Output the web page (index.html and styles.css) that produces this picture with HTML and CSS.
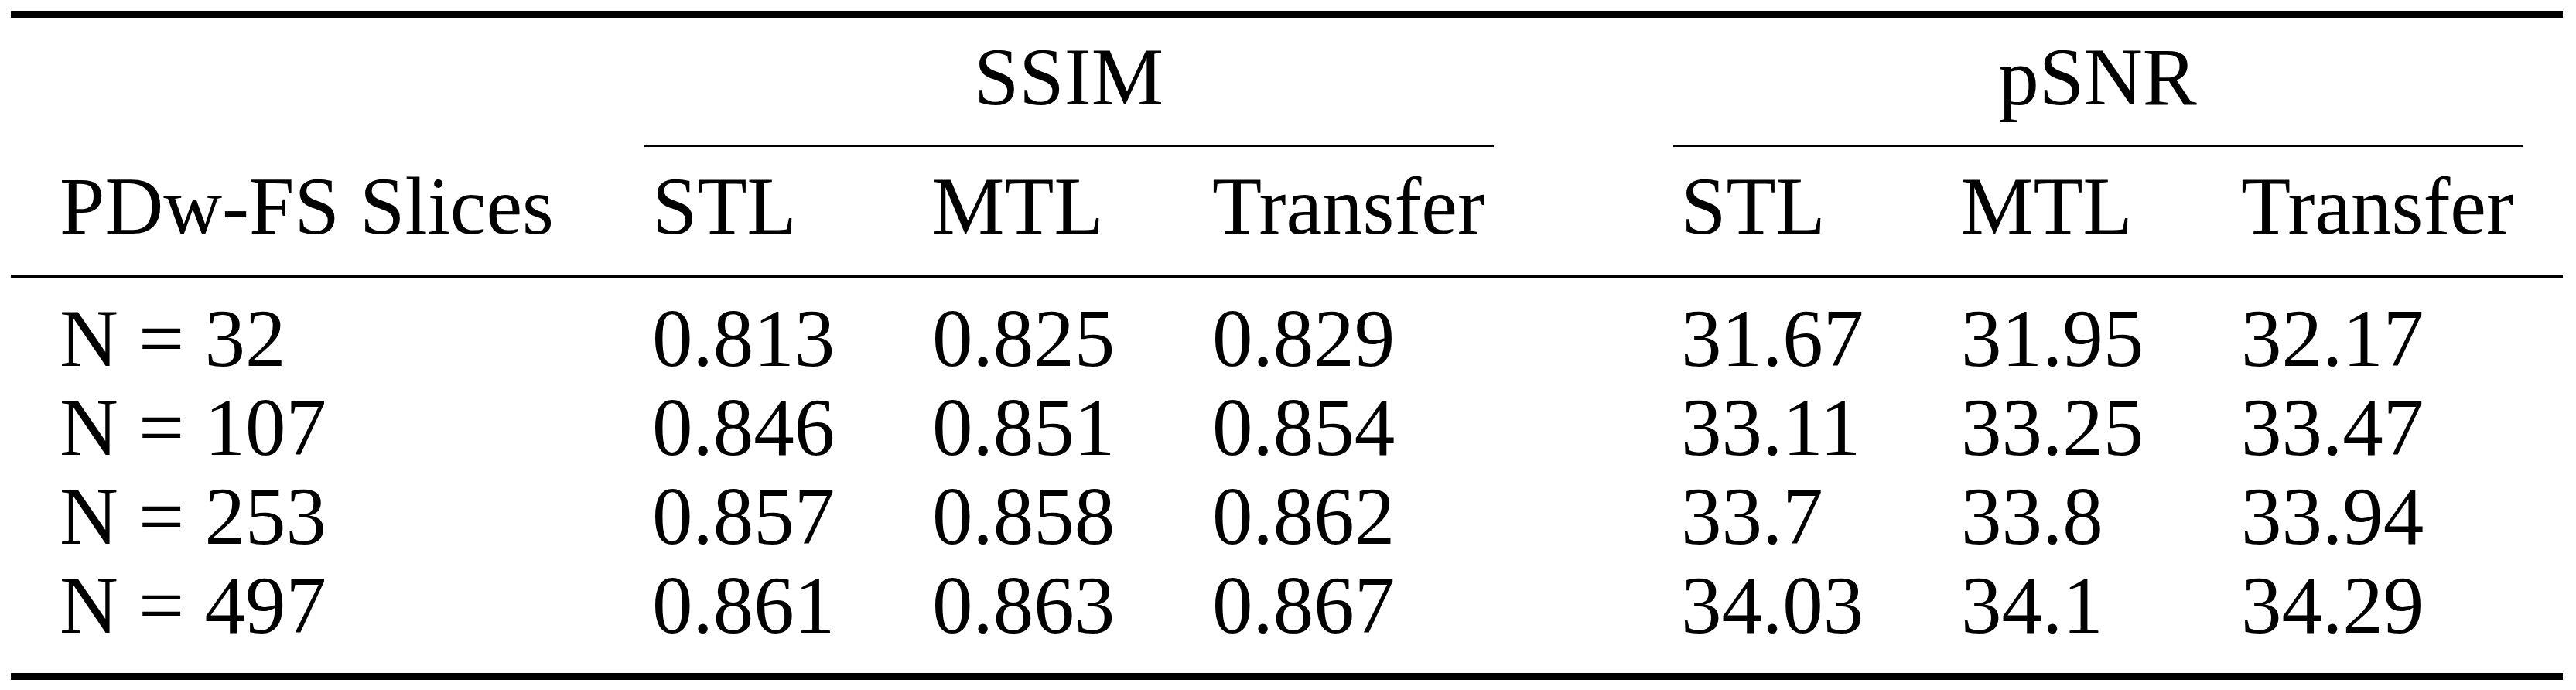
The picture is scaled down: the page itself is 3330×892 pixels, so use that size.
FILE: index.html
```html
<!DOCTYPE html>
<html lang="en">
<head>
    <meta charset="UTF-8">
    <title>PDw-FS Slices - SSIM / pSNR</title>
    <link rel="stylesheet" href="styles.css">
</head>
<body>
    <table class="results">
        <colgroup>
            <col class="col-name">
            <col class="col-num">
            <col class="col-num">
            <col class="col-wide">
            <col class="col-gap">
            <col class="col-num">
            <col class="col-num">
            <col class="col-wide">
        </colgroup>
        <thead>
            <tr class="group-row">
                <th></th>
                <th colspan="3" class="group">
                    <div class="group-title">SSIM</div>
                    <div class="cmidrule"></div>
                </th>
                <th></th>
                <th colspan="3" class="group">
                    <div class="group-title">pSNR</div>
                    <div class="cmidrule"></div>
                </th>
            </tr>
            <tr class="head-row">
                <th>PDw-FS Slices</th>
                <th>STL</th>
                <th>MTL</th>
                <th>Transfer</th>
                <th></th>
                <th>STL</th>
                <th>MTL</th>
                <th>Transfer</th>
            </tr>
        </thead>
        <tbody>
            <tr>
                <td>N = 32</td>
                <td>0.813</td>
                <td>0.825</td>
                <td>0.829</td>
                <td></td>
                <td>31.67</td>
                <td>31.95</td>
                <td>32.17</td>
            </tr>
            <tr>
                <td>N = 107</td>
                <td>0.846</td>
                <td>0.851</td>
                <td>0.854</td>
                <td></td>
                <td>33.11</td>
                <td>33.25</td>
                <td>33.47</td>
            </tr>
            <tr>
                <td>N = 253</td>
                <td>0.857</td>
                <td>0.858</td>
                <td>0.862</td>
                <td></td>
                <td>33.7</td>
                <td>33.8</td>
                <td>33.94</td>
            </tr>
            <tr>
                <td>N = 497</td>
                <td>0.861</td>
                <td>0.863</td>
                <td>0.867</td>
                <td></td>
                <td>34.03</td>
                <td>34.1</td>
                <td>34.29</td>
            </tr>
        </tbody>
    </table>
</body>
</html>
```

FILE: styles.css
```css
body {
    margin: 0;
    background-color: white;
    color: black;
}
.results {
    margin: 14px 0 0 14px;
    width: 3299px;
    table-layout: fixed;
    border-collapse: separate;
    border-spacing: 0;
    border-top: 9px solid black;
    border-bottom: 9px solid black;
    font-family: "Liberation Serif", "Times New Roman", serif;
    font-size: 105px;
    line-height: 115px;
}
.col-name {
    width: 766px;
}
.col-num {
    width: 362px;
}
.col-wide {
    width: 479px;
}
.col-gap {
    width: 127px;
}
th, td {
    padding: 0 63px;
    text-align: left;
    font-weight: normal;
    white-space: nowrap;
    vertical-align: top;
}
.group-row th {
    padding-top: 19px;
}
.group-row th.group {
    padding-left: 52.5px;
    padding-right: 52.5px;
    text-align: center;
}
.cmidrule {
    margin-top: 30px;
    border-top: 3px solid black;
}
.head-row th {
    padding-top: 19px;
    padding-bottom: 31px;
    border-bottom: 5px solid black;
}
tbody tr:first-child td {
    padding-top: 20px;
}
tbody tr:last-child td {
    padding-bottom: 30px;
}
```
